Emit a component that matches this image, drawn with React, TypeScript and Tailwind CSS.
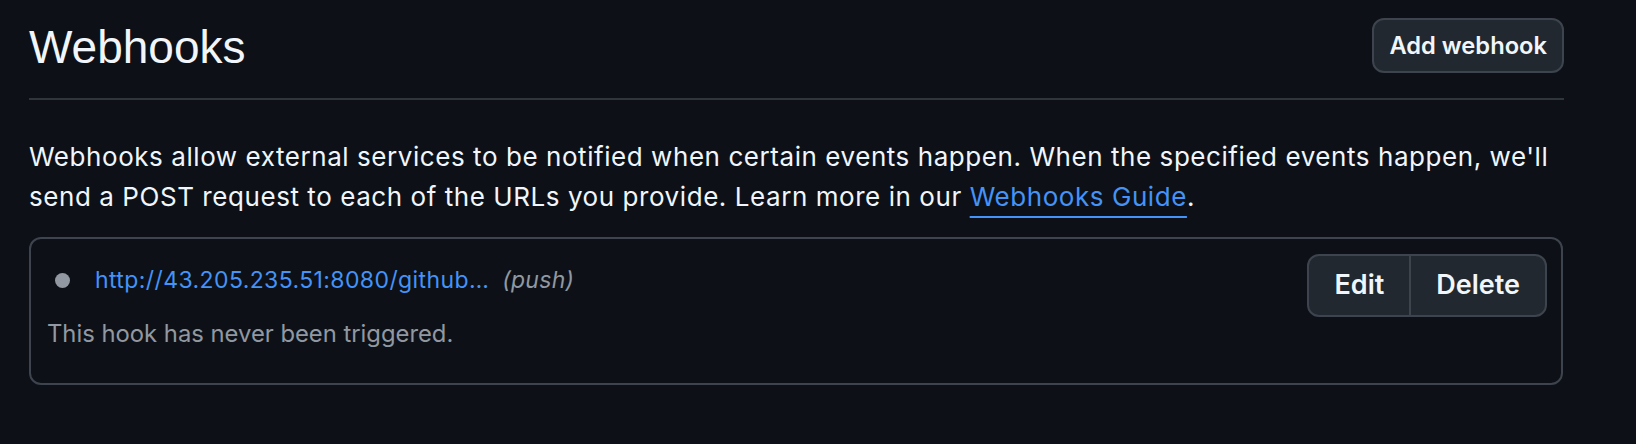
import React from "react";

export default function App() {
  return (
    <div className="min-h-[444px] w-full bg-[#0d1117] pl-[29px]">
      <div className="w-[1535px]">
        {/* Header */}
        <div className="flex items-start justify-between border-b-2 border-[#2f353d] pt-[18px] pb-[21px]">
          <h2 className="font-['Liberation_Sans',Arial,sans-serif] text-[46px] leading-[59px] font-normal text-[#f0f6fc]">
            Webhooks
          </h2>
          <button className="h-[55px] rounded-[12px] border-2 border-[#3d444d] bg-[#212830] px-[15px] font-['Inter',sans-serif] text-[23.7px] font-semibold text-[#f0f6fc]">
            Add webhook
          </button>
        </div>

        {/* Description */}
        <p className="mt-[37px] font-['Inter',sans-serif] text-[26px] leading-[40px] tracking-[0.56px] text-[#f0f6fc]">
          Webhooks allow external services to be notified when certain events happen. When the specified events happen, we'll
          <br />
          send a POST request to each of the URLs you provide. Learn more in our{" "}
          <a className="text-[#4493f8] underline decoration-2 underline-offset-[10px]" href="#">
            Webhooks Guide
          </a>
          .
        </p>

        {/* Hook card */}
        <div className="mt-[20px] flex w-[1534px] rounded-[12px] border-2 border-[#3d444d] pt-[15px] pr-[14px] pb-[33px] pl-[16px] font-['Inter',sans-serif]">
          <div className="flex-1 pt-[10px]">
            <div className="flex h-[32px] items-center pl-[8px]">
              <span className="h-[15px] w-[15px] rounded-full bg-[#9198a1]" />
              <a href="#" className="ml-[25px] text-[23px] leading-[32px] tracking-[0.4px] text-[#4493f8]">
                http://43.205.235.51:8080/github…
              </a>
              <span className="ml-[13px] text-[23px] leading-[32px] italic tracking-[0.3px] text-[#9198a1]">(push)</span>
            </div>
            <div className="mt-[22px] text-[23.8px] leading-[32px] text-[#9198a1]">
              This hook has never been triggered.
            </div>
          </div>
          <div className="flex h-[63px] overflow-hidden rounded-[12px] border-2 border-[#3d444d] bg-[#212830] text-[27px] font-semibold text-[#f0f6fc]">
            <button className="px-[25px]">Edit</button>
            <button className="border-l-2 border-[#3d444d] px-[25px]">Delete</button>
          </div>
        </div>
      </div>
    </div>
  );
}
